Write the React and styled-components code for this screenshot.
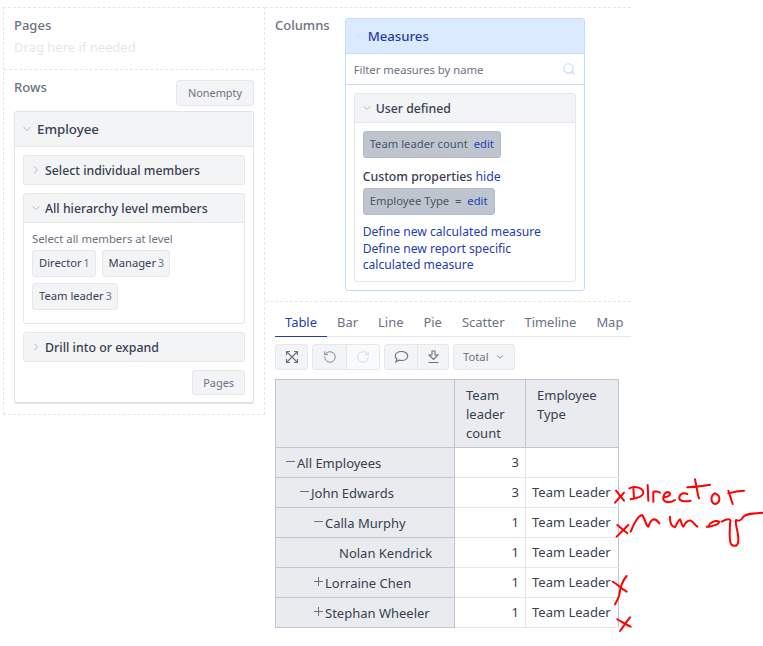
import React from "react";
import styled, { createGlobalStyle } from "styled-components";
import { ChevronDown, ChevronRight, Search, RotateCcw, RotateCw } from "lucide-react";

const Global = createGlobalStyle`
  html, body { margin: 0; padding: 0; background: #fff; }
  body { font-family: "Noto Sans", "Open Sans", sans-serif; font-size: 13px; line-height: 20px; color: #374151; }
  * { box-sizing: border-box; }
`;
const Page = styled.div`
  position: relative; width: 763px; height: 646px; overflow: hidden;
  display: flex; align-items: flex-start; padding: 7px 0 0 3px;
`;
const LeftCol = styled.div`
  width: 262px; display: flex; flex-direction: column; flex: none;
  border: 1px dashed #e5e7eb;
`;
const PagesZone = styled.div`
  height: 62px; padding: 7px 10px; border-bottom: 1px dashed #e5e7eb;
`;
const ZoneTitle = styled.div`
  font-size: 13px; font-weight: 500; color: #6b7280; line-height: 20px; height: 20px;
`;
const Hint = styled.div`
  font-size: 13px; color: #e5e7eb; line-height: 20px; margin-top: 2px;
`;
const RowsZone = styled.div`
  padding: 7px 10px 10px; display: flex; flex-direction: column;
`;
const RowsHead = styled.div`
  display: flex; justify-content: space-between; align-items: flex-start; margin-bottom: 5px;
`;
const Btn = styled.div`
  display: inline-flex; align-items: center; height: ${p => p.$h || 26}px; padding: 0 ${p => p.$px || 11}px;
  margin-top: ${p => p.$mt || 0}px;
  background: #f3f4f6; border: 1px solid #e5e7eb; border-radius: 3px; font-size: 10.9px; color: #6b7280;
`;
const Card = styled.div`
  border: 1px solid #e5e7eb; border-radius: 3px; background: #fff;
  ${p => p.$thick ? "border-color: #e0e2e7; border-bottom-width: 2px;" : ""}
`;
const CardHead = styled.div`
  display: flex; align-items: center; height: ${p => p.$h}px; padding: ${p => p.$pt || 0}px 0 0 6px; gap: ${p => p.$gap}px;
  background: ${p => p.$blue ? "#dbeafe" : "#f3f4f6"};
  font-size: ${p => p.$fs}px; font-weight: 500; color: ${p => p.$blue ? "#1e40af" : "#374151"};
  ${p => p.$open ? `border-bottom: 1px solid ${p.$blue ? "#bfdbfe" : "#e5e7eb"};` : ""}
  svg { flex: none; margin-top: ${p => p.$pt ? -p.$pt : 0}px; color: ${p => p.$blue ? "#bfdbfe" : "#9ca3af"}; }
`;
const CardBody = styled.div`
  padding: 8px 8px 7px; display: flex; flex-direction: column; gap: 8px;
`;
const LevelBody = styled.div`
  padding: 7px 8px 13px;
`;
const Muted = styled.div`
  font-size: 11.3px; line-height: 18px; color: #6b7280; margin-bottom: 2px;
`;
const Chips = styled.div`
  display: flex; flex-wrap: wrap; gap: 6px;
`;
const Chip = styled.div`
  display: inline-flex; align-items: center; height: 27px; padding: 0 5px 2px 6px; background: #f3f4f6;
  border: 1px solid #e5e7eb; border-radius: 3px; font-size: 11.2px; color: #374151;
  span { font-size: 10.5px; color: #6b7280; margin-left: 2px; }
`;
const PagesAction = styled.div`
  display: flex; justify-content: flex-end;
`;
const RightCol = styled.div`
  width: 366px; flex: none; display: flex; flex-direction: column;
  border-top: 1px dashed #e5e7eb;
`;
const ColumnsZone = styled.div`
  display: flex; height: 294px; padding: 7px 0 0 10px; gap: 15px; border-bottom: 1px dashed #e5e7eb;
`;
const MeasuresPanel = styled.div`
  width: 240px; height: 273px; border: 1px solid #bfdbfe; border-radius: 3px; background: #fff; margin-top: 3px;
`;
const Filter = styled.div`
  display: flex; align-items: center; justify-content: space-between; height: 31px; padding: 2px 8px 0;
  border-bottom: 1px solid #bfdbfe; font-size: 11.25px; color: #6b7280;
  svg { color: #bfdbfe; margin-top: -3px; }
`;
const MeasureBody = styled.div`
  padding: 8px 8px 0;
`;
const InnerBody = styled.div`
  padding: 8px 8px 7px; display: flex; flex-direction: column; align-items: flex-start;
`;
const Selected = styled.div`
  display: inline-flex; align-items: center; height: 27px; padding: 0 6px 1px; background: #bfc5cf;
  border: 1px solid #b4bac5; border-radius: 3px; font-size: 11.25px; color: #4b5563; white-space: pre;
  a { color: #1e40af; }
`;
const PropLine = styled.div`
  font-size: 12.3px; line-height: 20px; font-weight: 500; color: #374151; margin-top: 9px; margin-bottom: 1px;
  span { font-weight: 400; color: #1e40af; }
`;
const Links = styled.div`
  font-size: 12.15px; line-height: 16.5px; color: #1e40af; margin-top: 9px; width: 190px;
`;
const ReportZone = styled.div`
  padding: 10px 0 0 10px;
`;
const Tabs = styled.div`
  display: flex; height: 25px; border-bottom: 1px solid #e5e7eb; width: 356px; font-size: 12.95px;
`;
const Tab = styled.div`
  padding: 0 10px; line-height: 20px; height: 25px; color: ${p => p.$on ? "#1e40af" : "#6b7280"};
  ${p => p.$on ? "border-bottom: 1px solid #1e40af;" : ""}
`;
const Toolbar = styled.div`
  display: flex; gap: 4px; margin-top: 7px; height: 26px; margin-bottom: 9px;
`;
const Group = styled.div`
  display: flex; border: 1px solid #e5e7eb; border-radius: 3px; background: #f3f4f6; overflow: hidden;
`;
const Tool = styled.div`
  width: ${p => p.$w || 33}px; height: 100%; display: flex; align-items: center; justify-content: center;
  color: ${p => p.$off ? "#d1d5db" : "#6b7280"}; background: ${p => p.$off ? "#f9fafb" : "transparent"};
  & + & { border-left: 1px solid #e5e7eb; }
`;
const TotalBtn = styled.div`
  display: flex; align-items: center; gap: 6px; padding: 0 9px; font-size: 11.25px; color: #6b7280;
  svg { color: #6b7280; }
`;
const Table = styled.table`
  border-collapse: collapse; table-layout: fixed; width: 343px; font-size: 13px;
  border: 1px solid #c0c5d0;
`;
const Th = styled.th`
  background: #e9ebef; border: 1px solid #c0c5d0; font-weight: 400; text-align: left; vertical-align: top;
  padding: 6px 11px 0; line-height: 19px; color: #374151; height: 68px;
`;
const RowHead = styled.th`
  background: #e9ebef; border: 1px solid #c0c5d0; font-weight: 400; text-align: left; height: 30px;
  padding: 0 0 0 ${p => p.$level * 14 + 9}px; color: #374151; white-space: nowrap;
`;
const Toggle = styled.span`
  display: inline-flex; width: 12px; height: 18px; vertical-align: top; color: #6b7280; align-items: center; justify-content: flex-start;
`;
const Td = styled.td`
  border: 1px solid #e5e7eb; border-left-color: #c0c5d0; padding: 0 6px 1px; text-align: ${p => p.$num ? "right" : "left"};
  color: #374151; white-space: nowrap; background: #fff;
  &:last-child { border-right-color: #c0c5d0; }
`;
const Ink = styled.svg`
  position: absolute; left: 600px; top: 470px; pointer-events: none;
`;

const Mark = ({ plus }) => (
  <Toggle>
    <svg width="11" height="11" viewBox="0 0 11 11" fill="none" stroke="currentColor" strokeWidth="1">
      <path d="M1 5.5H10" />
      {plus && <path d="M5.5 1V10" />}
    </svg>
  </Toggle>
);

const rows = [
  { name: "All Employees", level: 0, mark: "minus", n: "3", type: "" },
  { name: "John Edwards", level: 1, mark: "minus", n: "3", type: "Team Leader" },
  { name: "Calla Murphy", level: 2, mark: "minus", n: "1", type: "Team Leader" },
  { name: "Nolan Kendrick", level: 3, mark: "none", n: "1", type: "Team Leader" },
  { name: "Lorraine Chen", level: 2, mark: "plus", n: "1", type: "Team Leader" },
  { name: "Stephan Wheeler", level: 2, mark: "plus", n: "1", type: "Team Leader" },
];

export default function App() {
  return (
    <Page>
      <Global />
      <LeftCol>
        <PagesZone>
          <ZoneTitle>Pages</ZoneTitle>
          <Hint>Drag here if needed</Hint>
        </PagesZone>
        <RowsZone>
          <RowsHead>
            <ZoneTitle>Rows</ZoneTitle>
            <Btn $mt={3}>Nonempty</Btn>
          </RowsHead>
          <Card $thick>
            <CardHead $h={35} $gap={4} $fs={13.3} $open><ChevronDown size={12} strokeWidth={1.5} />Employee</CardHead>
            <CardBody>
              <Card>
                <CardHead $h={28} $pt={2} $gap={3} $fs={12.3}><ChevronRight size={12} strokeWidth={1.5} />Select individual members</CardHead>
              </Card>
              <Card>
                <CardHead $h={29} $pt={2} $gap={3} $fs={12.3} $open><ChevronDown size={12} strokeWidth={1.5} />All hierarchy level members</CardHead>
                <LevelBody>
                  <Muted>Select all members at level</Muted>
                  <Chips>
                    <Chip>Director<span>1</span></Chip>
                    <Chip>Manager<span>3</span></Chip>
                    <Chip>Team leader<span>3</span></Chip>
                  </Chips>
                </LevelBody>
              </Card>
              <Card>
                <CardHead $h={28} $pt={2} $gap={3} $fs={12.4}><ChevronRight size={12} strokeWidth={1.5} />Drill into or expand</CardHead>
              </Card>
              <PagesAction><Btn $h={25} $px={10}>Pages</Btn></PagesAction>
            </CardBody>
          </Card>
        </RowsZone>
      </LeftCol>
      <RightCol>
        <ColumnsZone>
          <ZoneTitle>Columns</ZoneTitle>
          <MeasuresPanel>
            <CardHead $blue $open $h={35} $gap={4} $fs={13.2}><ChevronDown size={12} strokeWidth={1.5} />Measures</CardHead>
            <Filter>Filter measures by name<Search size={14} /></Filter>
            <MeasureBody>
              <Card>
                <CardHead $h={29} $pt={2} $gap={3} $fs={12.3} $open><ChevronDown size={12} strokeWidth={1.5} />User defined</CardHead>
                <InnerBody>
                  <Selected>Team leader count  <a>edit</a></Selected>
                  <PropLine>Custom properties <span>hide</span></PropLine>
                  <Selected>Employee Type  =  <a>edit</a></Selected>
                  <Links>
                    <div>Define new calculated measure</div>
                    <div>Define new report specific calculated measure</div>
                  </Links>
                </InnerBody>
              </Card>
            </MeasureBody>
          </MeasuresPanel>
        </ColumnsZone>
        <ReportZone>
          <Tabs>
            <Tab $on>Table</Tab><Tab>Bar</Tab><Tab>Line</Tab><Tab>Pie</Tab><Tab>Scatter</Tab><Tab>Timeline</Tab><Tab>Map</Tab>
          </Tabs>
          <Toolbar>
            <Group>
              <Tool $w={31}>
                <svg width="14" height="14" viewBox="0 0 14 14" fill="none" stroke="currentColor" strokeWidth="1.2">
                  <path d="M2 2L12 12M12 2L2 12" />
                  <path d="M1.5 5V1.5H5M9 1.5H12.5V5M12.5 9V12.5H9M5 12.5H1.5V9" />
                </svg>
              </Tool>
            </Group>
            <Group>
              <Tool><RotateCcw size={14} strokeWidth={1.4} /></Tool>
              <Tool $off><RotateCw size={14} strokeWidth={1.4} /></Tool>
            </Group>
            <Group>
              <Tool $w={32}>
                <svg width="15" height="14" viewBox="0 0 15 14" fill="none" stroke="currentColor" strokeWidth="1.2">
                  <path d="M7.5 1.5C11 1.5 13.7 3.4 13.7 6S11 10.5 7.5 10.5C6.6 10.5 5.8 10.4 5 10.1L2 12L2.8 9C1.8 8.2 1.3 7.2 1.3 6C1.3 3.4 4 1.5 7.5 1.5Z" />
                </svg>
              </Tool>
              <Tool $w={31}>
                <svg width="13" height="14" viewBox="0 0 13 14" fill="none" stroke="currentColor" strokeWidth="1.1">
                  <path d="M5 1H8V5H11L6.5 9.5L2 5H5Z" /><path d="M1.5 12.5H11.5" />
                </svg>
              </Tool>
            </Group>
            <Group><TotalBtn>Total<ChevronDown size={10} /></TotalBtn></Group>
          </Toolbar>
          <Table>
            <colgroup><col width="179" /><col width="71" /><col width="93" /></colgroup>
            <thead>
              <tr><Th /><Th>Team leader count</Th><Th>Employee Type</Th></tr>
            </thead>
            <tbody>
              {rows.map(r => (
                <tr key={r.name}>
                  <RowHead $level={r.level}>
                    {r.mark === "none" ? <Toggle /> : <Mark plus={r.mark === "plus"} />}
                    {r.name}
                  </RowHead>
                  <Td $num>{r.n}</Td>
                  <Td>{r.type}</Td>
                </tr>
              ))}
            </tbody>
          </Table>
        </ReportZone>
      </RightCol>
      <Ink width="163" height="176" viewBox="0 0 489 528" fill="none" stroke="#f00" strokeWidth="6" strokeLinecap="round" strokeLinejoin="round">
        <path d="M48 62L72 92M72 68L45 98" />
        <path d="M100 52L102 85M88 55C105 45 130 55 130 68C130 80 110 85 92 88" />
        <path d="M143 45L145 92" />
        <path d="M160 95L160 65C165 65 175 62 180 68" />
        <path d="M192 82C205 82 215 72 208 68C198 62 188 75 190 88C195 100 215 98 225 90" />
        <path d="M262 72C248 65 236 75 238 86C240 94 258 96 272 92" />
        <path d="M285 28C290 50 292 70 297 85M262 52C290 50 310 48 330 44" />
        <path d="M345 70C332 75 330 98 345 102C360 100 365 78 345 70" />
        <path d="M385 62L398 102M385 70C400 65 420 62 432 62" />
        <path d="M52 165L82 190M85 165L50 200" />
        <path d="M92 185C100 165 110 140 125 135C135 140 135 165 145 170C150 155 160 135 178 160" />
        <path d="M210 140C210 155 212 170 225 172C232 160 235 150 240 148C245 155 245 170 250 170C255 160 262 150 272 152C280 155 285 165 292 170" />
        <path d="M320 170C335 170 355 165 358 155C345 150 325 158 328 170" />
        <path d="M365 155C385 145 395 145 390 160C390 185 385 215 395 225C410 232 418 225 414 195C412 175 405 165 408 150C420 155 425 150 430 140C440 130 460 130 490 128" />
        <path d="M38 335C50 340 60 355 80 365M80 318C65 335 60 355 58 375C55 385 50 395 45 403" />
        <path d="M52 448C65 455 80 465 92 470M90 442C80 455 70 470 60 483" />
      </Ink>
    </Page>
  );
}
